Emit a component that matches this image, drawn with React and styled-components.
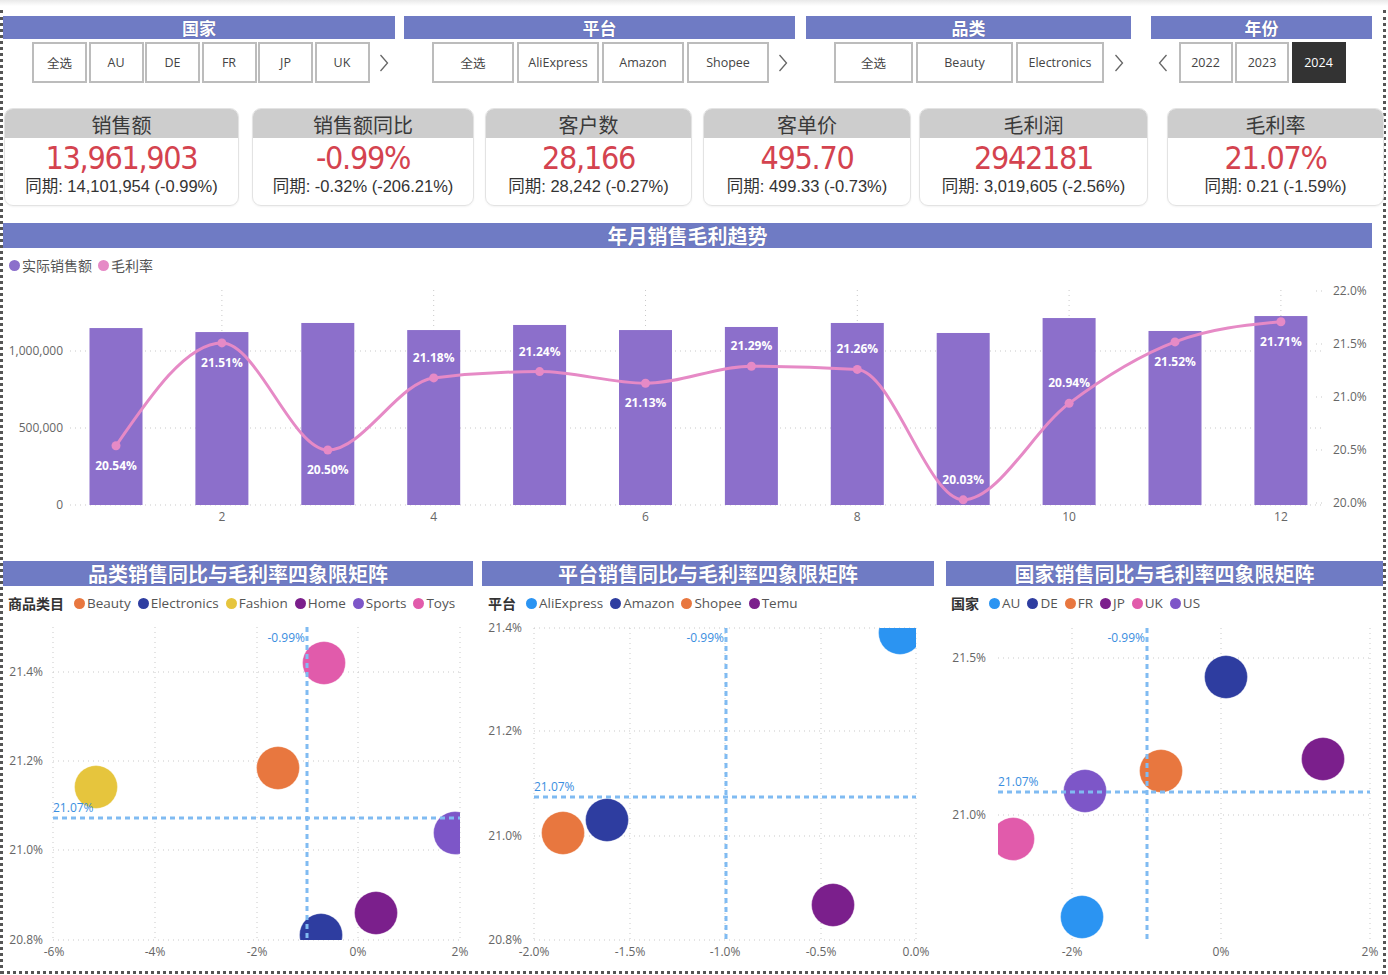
import React from 'react';
import styled, { createGlobalStyle } from 'styled-components';

const CJK = `"Noto Sans CJK SC", "Noto Sans", sans-serif`;
const UI = `"Open Sans", "Noto Sans CJK SC", sans-serif`;
const NUM = `"DejaVu Sans Condensed", "DejaVu Sans", sans-serif`;
const SUB = `"Liberation Sans", "Noto Sans CJK SC", sans-serif`;

const C = {
  header: '#6f7bc4',
  red: '#d4434f',
  bar: '#8c6fcb',
  line: '#e68ac6',
  ref: '#80bbf2',
  refText: '#3a8ee0',
  axis: '#666666',
  grid: '#c9c9c9',
  orange: '#e8773f',
  navy: '#2e3da0',
  yellow: '#e6c53d',
  plum: '#7b1f8c',
  violet: '#7d56c8',
  pink: '#e15bab',
  sky: '#2b94f2',
};

const GlobalStyle = createGlobalStyle`
  html, body { margin: 0; padding: 0; background: #fff; }
  body { font-family: ${UI}; color: #333; }
  * { box-sizing: border-box; }
`;

/* ---------- page frame ---------- */
const Shade = styled.div`
  height: 10px;
  width: 1388px;
  background: linear-gradient(#e9e9e9, #ffffff 60%);
`;

const Frame = styled.div`
  width: 1386px;
  height: 964px;
  border-left: 3px dotted #555;
  border-right: 3px dotted #555;
  border-bottom: 3px dotted #555;
  display: flex;
  flex-direction: column;
`;

/* ---------- slicers ---------- */
const SlicerRow = styled.div`
  display: flex;
  margin-top: 6px;
`;

const Slicer = styled.div`
  width: ${p => p.$w}px;
  margin-left: ${p => p.$gap || 0}px;
`;

const BarTitle = styled.div`
  height: ${p => p.$h || 23}px;
  background: ${C.header};
  color: #fff;
  font-family: ${CJK};
  font-weight: 700;
  font-size: ${p => p.$size || 17}px;
  line-height: ${p => p.$h || 23}px;
  text-align: center;
  text-shadow: 0 0 1px rgba(40, 40, 80, 0.45);
  white-space: nowrap;
`;

const ButtonRow = styled.div`
  display: flex;
  align-items: center;
  gap: ${p => p.$gap}px;
  margin-top: 3px;
  padding-left: ${p => p.$pad}px;
`;

const SlicerButton = styled.div`
  width: ${p => p.$w}px;
  height: 41px;
  border: 2px solid ${p => (p.$on ? '#333' : '#bcbcbc')};
  background: ${p => (p.$on ? '#333' : '#fff')};
  color: ${p => (p.$on ? '#fff' : '#444')};
  font-family: ${UI};
  font-size: 12.5px;
  display: flex;
  align-items: center;
  justify-content: center;
  flex-shrink: 0;
`;

const ArrowBox = styled.div`
  width: 12px;
  height: 41px;
  display: flex;
  align-items: center;
  justify-content: center;
  margin-left: ${p => p.$ml || 0}px;
  margin-right: ${p => p.$mr || 0}px;
  flex-shrink: 0;
`;

const Chevron = ({ dir, ml, mr }) => (
  <ArrowBox $ml={ml} $mr={mr}>
    <svg width="10" height="18" viewBox="0 0 10 18">
      <polyline
        points={dir === 'right' ? '1.5,1 8.5,9 1.5,17' : '8.5,1 1.5,9 8.5,17'}
        fill="none"
        stroke="#666"
        strokeWidth="1.3"
      />
    </svg>
  </ArrowBox>
);

/* ---------- KPI cards ---------- */
const KpiRow = styled.div`
  display: flex;
  margin-top: 25px;
  padding-left: 1px;
  height: 98px;
`;

const Card = styled.div`
  width: ${p => p.$w}px;
  margin-left: ${p => p.$gap || 0}px;
  height: 98px;
  border: 1px solid #e3e3e3;
  border-radius: 9px;
  overflow: hidden;
  box-shadow: 0 1px 2px rgba(0, 0, 0, 0.05);
  display: flex;
  flex-direction: column;
  align-items: center;
  flex-shrink: 0;
`;

const CardHead = styled.div`
  align-self: stretch;
  height: 29px;
  background: #cdcdcd;
  font-family: ${CJK};
  font-size: 20px;
  line-height: 31px;
  color: #3a3a3a;
  text-align: center;
`;

const CardValue = styled.div`
  margin-top: 2px;
  font-family: ${NUM};
  font-size: 32px;
  line-height: 37px;
  height: 37px;
  color: ${C.red};
  letter-spacing: -1.3px;
  white-space: nowrap;
`;

const CardSub = styled.div`
  font-family: ${SUB};
  font-size: 16.5px;
  line-height: 18px;
  height: 18px;
  color: #333;
  white-space: nowrap;
`;

/* ---------- trend chart ---------- */
const Section = styled.section`
  margin-top: ${p => p.$mt}px;
  width: ${p => p.$w}px;
  margin-left: ${p => p.$ml || 0}px;
  flex-shrink: 0;
`;

const Legend = styled.div`
  display: flex;
  align-items: center;
  height: 14px;
  margin-top: 10px;
  padding-left: ${p => p.$pad}px;
  font-family: ${UI};
  font-size: ${p => p.$size || 13.5}px;
  color: #555;
  white-space: nowrap;
`;

const LegendLabel = styled.span`
  font-family: ${CJK};
  font-size: 14px;
  font-weight: 700;
  color: #333;
  margin-right: 10px;
`;

const LegendItem = styled.span`
  display: inline-flex;
  align-items: center;
  margin-right: ${p => p.$mr ?? 6}px;
  font-family: ${p => (p.$cjk ? CJK : UI)};
`;

const Dot = styled.i`
  width: 11px;
  height: 11px;
  border-radius: 50%;
  background: ${p => p.$c};
  margin-right: 2px;
  display: inline-block;
`;

const ChartSvg = styled.svg`
  display: block;
  margin-top: ${p => p.$mt || 0}px;
  font-family: ${UI};
  overflow: visible;
`;

const BottomRow = styled.div`
  display: flex;
  margin-top: 31px;
`;

/* ---------- data ---------- */
const sales = [1149000, 1123000, 1182000, 1136000, 1169000, 1136000, 1156000, 1182000, 1117000, 1214000, 1130000, 1227000];
const margins = [20.54, 21.51, 20.5, 21.18, 21.24, 21.13, 21.29, 21.26, 20.03, 20.94, 21.52, 21.71];
const labelSide = [1, 1, 1, -1, -1, 1, -1, -1, -1, -1, 1, 1];

const mx = i => 116 + i * 105.9;
const salesY = v => 505 - (v / 1e6) * 154;
const rateY = r => 503 - (r - 20) * 106;

function monotonePath(pts) {
  const n = pts.length;
  const h = [];
  const s = [];
  for (let i = 0; i < n - 1; i++) {
    h[i] = pts[i + 1][0] - pts[i][0];
    s[i] = (pts[i + 1][1] - pts[i][1]) / h[i];
  }
  const t = new Array(n).fill(0);
  for (let i = 1; i < n - 1; i++) {
    const s0 = s[i - 1];
    const s1 = s[i];
    const p = (s0 * h[i] + s1 * h[i - 1]) / (h[i - 1] + h[i]);
    t[i] = (Math.sign(s0) + Math.sign(s1)) * Math.min(Math.abs(s0), Math.abs(s1), 0.5 * Math.abs(p)) || 0;
  }
  t[0] = (3 * s[0] - t[1]) / 2;
  t[n - 1] = (3 * s[n - 2] - t[n - 2]) / 2;
  let d = `M${pts[0][0]},${pts[0][1]}`;
  for (let i = 0; i < n - 1; i++) {
    const dx = h[i] / 3;
    d += ` C${pts[i][0] + dx},${pts[i][1] + dx * t[i]} ${pts[i + 1][0] - dx},${pts[i + 1][1] - dx * t[i + 1]} ${pts[i + 1][0]},${pts[i + 1][1]}`;
  }
  return d;
}

// chart drawn in page coordinates; the svg sits at x 3, y 275
const TOP = 275;
const LEFT = 3;

function TrendChart() {
  const pts = margins.map((r, i) => [mx(i), rateY(r)]);
  return (
    <ChartSvg width={1383} height={255} $mt={3}>
      <g transform={`translate(${-LEFT},${-TOP})`}>
        {[351, 428, 505].map(y => (
          <line key={y} x1={70} x2={1322} y1={y} y2={y} stroke={C.grid} strokeDasharray="1 4" />
        ))}
        {[291, 344, 397, 450, 503].map(y => (
          <line key={y} x1={1316} x2={1326} y1={y} y2={y} stroke={C.grid} strokeDasharray="1 4" />
        ))}
        {[1, 3, 5, 7, 9, 11].map(i => (
          <line key={i} x1={mx(i)} x2={mx(i)} y1={290} y2={505} stroke={C.grid} strokeDasharray="1 4" />
        ))}
        {[['1,000,000', 351], ['500,000', 428], ['0', 505]].map(([t, y]) => (
          <text key={t} x={63} y={y + 4} textAnchor="end" fontSize="12" fill={C.axis}>{t}</text>
        ))}
        {[['22.0%', 291], ['21.5%', 344], ['21.0%', 397], ['20.5%', 450], ['20.0%', 503]].map(([t, y]) => (
          <text key={t} x={1333} y={y + 4} fontSize="12" fill={C.axis}>{t}</text>
        ))}
        {[1, 3, 5, 7, 9, 11].map(i => (
          <text key={i} x={mx(i)} y={521} textAnchor="middle" fontSize="12" fill={C.axis}>{i + 1}</text>
        ))}
        {sales.map((v, i) => (
          <rect key={i} x={mx(i) - 26.5} y={salesY(v)} width={53} height={505 - salesY(v)} fill={C.bar} />
        ))}
        <path d={monotonePath(pts)} fill="none" stroke={C.line} strokeWidth="3" />
        {pts.map(([x, y], i) => (
          <circle key={i} cx={x} cy={y} r={4.5} fill={C.line} />
        ))}
        {pts.map(([x, y], i) => (
          <text
            key={i}
            x={x}
            y={y + labelSide[i] * 20 + 4}
            textAnchor="middle"
            fontSize="12"
            fontWeight="700"
            fill="#fff"
          >
            {margins[i].toFixed(2)}%
          </text>
        ))}
      </g>
    </ChartSvg>
  );
}

/* ---------- quadrant scatter ---------- */
const STOP = 615;

function Quadrant({ cfg }) {
  const { px, w, plot, vgrid, hgrid, xlabels, ylabels, yLabelX, refX, refY, bubbles, id } = cfg;
  return (
    <ChartSvg width={w} height={352} $mt={5}>
      <defs>
        <clipPath id={id}>
          <rect x={plot.x0} y={plot.y0} width={plot.x1 - plot.x0} height={plot.y1 - plot.y0} />
        </clipPath>
      </defs>
      <g transform={`translate(${-px},${-STOP})`}>
        {vgrid.map(x => (
          <line key={`v${x}`} x1={x} x2={x} y1={plot.y0} y2={plot.y1} stroke={C.grid} strokeDasharray="1 4" />
        ))}
        {hgrid.map(y => (
          <line key={`h${y}`} x1={plot.x0} x2={plot.x1} y1={y} y2={y} stroke={C.grid} strokeDasharray="1 4" />
        ))}
        {ylabels.map(([t, y]) => (
          <text key={t} x={yLabelX} y={y + 4} textAnchor="end" fontSize="12" fill={C.axis}>{t}</text>
        ))}
        {xlabels.map(([t, x]) => (
          <text key={t} x={x} y={956} textAnchor="middle" fontSize="12" fill={C.axis}>{t}</text>
        ))}
        <g clipPath={`url(#${id})`}>
          {bubbles.map(([x, y, c], i) => (
            <circle key={i} cx={x} cy={y} r={21.5} fill={c} stroke="rgba(255,255,255,0.35)" strokeWidth="1" />
          ))}
        </g>
        <line x1={refX} x2={refX} y1={plot.y0} y2={plot.y1} stroke={C.ref} strokeWidth="3" strokeDasharray="5 4" />
        <line x1={plot.x0} x2={plot.x1} y1={refY} y2={refY} stroke={C.ref} strokeWidth="3" strokeDasharray="5 4" />
        <text x={refX - 2} y={642} textAnchor="end" fontSize="12" fill={C.refText}>-0.99%</text>
        <text x={plot.x0} y={refY - 6} fontSize="12" fill={C.refText}>21.07%</text>
      </g>
    </ChartSvg>
  );
}

const categoryCfg = {
  id: 'clip-cat',
  px: 3,
  w: 470,
  plot: { x0: 53, x1: 460, y0: 627, y1: 940 },
  vgrid: [53, 155, 257, 358, 460],
  hgrid: [672, 761, 850, 940],
  ylabels: [['21.4%', 672], ['21.2%', 761], ['21.0%', 850], ['20.8%', 940]],
  yLabelX: 43,
  xlabels: [['-6%', 54], ['-4%', 155], ['-2%', 257], ['0%', 358], ['2%', 460]],
  refX: 307,
  refY: 818,
  bubbles: [
    [96, 787, C.yellow],
    [278, 768, C.orange],
    [324, 663, C.pink],
    [455, 833, C.violet],
    [376, 913, C.plum],
    [321, 935, C.navy],
  ],
};

const platformCfg = {
  id: 'clip-plat',
  px: 482,
  w: 452,
  plot: { x0: 534, x1: 916, y0: 628, y1: 940 },
  vgrid: [534, 630, 725, 821, 916],
  hgrid: [628, 731, 836, 940],
  ylabels: [['21.4%', 628], ['21.2%', 731], ['21.0%', 836], ['20.8%', 940]],
  yLabelX: 522,
  xlabels: [['-2.0%', 534], ['-1.5%', 630], ['-1.0%', 725], ['-0.5%', 821], ['0.0%', 916]],
  refX: 726,
  refY: 797,
  bubbles: [
    [900, 633, C.sky],
    [563, 833, C.orange],
    [607, 820, C.navy],
    [833, 905, C.plum],
  ],
};

const countryCfg = {
  id: 'clip-country',
  px: 946,
  w: 437,
  plot: { x0: 998, x1: 1370, y0: 628, y1: 940 },
  vgrid: [1072, 1221, 1370],
  hgrid: [658, 815],
  ylabels: [['21.5%', 658], ['21.0%', 815]],
  yLabelX: 986,
  xlabels: [['-2%', 1072], ['0%', 1221], ['2%', 1370]],
  refX: 1147,
  refY: 792,
  bubbles: [
    [1226, 677, C.navy],
    [1323, 759, C.plum],
    [1161, 771, C.orange],
    [1085, 791, C.violet],
    [1013, 839, C.pink],
    [1082, 917, C.sky],
  ],
};

const kpis = [
  { w: 235, gap: 0, title: '销售额', value: '13,961,903', sub: '同期: 14,101,954 (-0.99%)' },
  { w: 222, gap: 13, title: '销售额同比', value: '-0.99%', sub: '同期: -0.32% (-206.21%)' },
  { w: 207, gap: 11, title: '客户数', value: '28,166', sub: '同期: 28,242 (-0.27%)' },
  { w: 208, gap: 11, title: '客单价', value: '495.70', sub: '同期: 499.33 (-0.73%)' },
  { w: 229, gap: 8, title: '毛利润', value: '2942181', sub: '同期: 3,019,605 (-2.56%)' },
  { w: 217, gap: 19, title: '毛利率', value: '21.07%', sub: '同期: 0.21 (-1.59%)' },
];

const panels = [
  {
    w: 470, ml: 0, pad: 5, title: '品类销售同比与毛利率四象限矩阵', label: '商品类目', cfg: categoryCfg,
    items: [['Beauty', C.orange], ['Electronics', C.navy], ['Fashion', C.yellow], ['Home', C.plum], ['Sports', C.violet], ['Toys', C.pink]],
  },
  {
    w: 452, ml: 9, pad: 6, title: '平台销售同比与毛利率四象限矩阵', label: '平台', cfg: platformCfg,
    items: [['AliExpress', C.sky], ['Amazon', C.navy], ['Shopee', C.orange], ['Temu', C.plum]],
  },
  {
    w: 437, ml: 12, pad: 5, title: '国家销售同比与毛利率四象限矩阵', label: '国家', cfg: countryCfg,
    items: [['AU', C.sky], ['DE', C.navy], ['FR', C.orange], ['JP', C.plum], ['UK', C.pink], ['US', C.violet]],
  },
];

export default function App() {
  return (
    <>
      <GlobalStyle />
      <Shade />
      <Frame>
        <SlicerRow>
          <Slicer $w={392}>
            <BarTitle>国家</BarTitle>
            <ButtonRow $pad={29} $gap={1.5}>
              {['全选', 'AU', 'DE', 'FR', 'JP', 'UK'].map(t => (
                <SlicerButton key={t} $w={55}>{t}</SlicerButton>
              ))}
              <Chevron dir="right" ml={7} />
            </ButtonRow>
          </Slicer>
          <Slicer $w={391} $gap={9}>
            <BarTitle>平台</BarTitle>
            <ButtonRow $pad={28} $gap={3}>
              {['全选', 'AliExpress', 'Amazon', 'Shopee'].map(t => (
                <SlicerButton key={t} $w={82}>{t}</SlicerButton>
              ))}
              <Chevron dir="right" ml={5} />
            </ButtonRow>
          </Slicer>
          <Slicer $w={325} $gap={11}>
            <BarTitle>品类</BarTitle>
            <ButtonRow $pad={28} $gap={3}>
              <SlicerButton $w={79}>全选</SlicerButton>
              <SlicerButton $w={97}>Beauty</SlicerButton>
              <SlicerButton $w={88}>Electronics</SlicerButton>
              <Chevron dir="right" ml={6} />
            </ButtonRow>
          </Slicer>
          <Slicer $w={221} $gap={20}>
            <BarTitle>年份</BarTitle>
            <ButtonRow $pad={6} $gap={2.5}>
              <Chevron dir="left" mr={7} />
              <SlicerButton $w={54}>2022</SlicerButton>
              <SlicerButton $w={54}>2023</SlicerButton>
              <SlicerButton $w={54} $on>2024</SlicerButton>
            </ButtonRow>
          </Slicer>
        </SlicerRow>

        <KpiRow>
          {kpis.map(k => (
            <Card key={k.title} $w={k.w} $gap={k.gap}>
              <CardHead>{k.title}</CardHead>
              <CardValue>{k.value}</CardValue>
              <CardSub>{k.sub}</CardSub>
            </Card>
          ))}
        </KpiRow>

        <Section $mt={17} $w={1369}>
          <BarTitle $h={25} $size={20}>年月销售毛利趋势</BarTitle>
          <Legend $pad={6} $size={14}>
            <LegendItem $cjk>
              <Dot $c={C.bar} />实际销售额
            </LegendItem>
            <LegendItem $cjk>
              <Dot $c={C.line} />毛利率
            </LegendItem>
          </Legend>
          <TrendChart />
        </Section>

        <BottomRow>
          {panels.map(p => (
            <Section key={p.title} $mt={0} $w={p.w} $ml={p.ml}>
              <BarTitle $h={25} $size={20}>{p.title}</BarTitle>
              <Legend $pad={p.pad}>
                <LegendLabel>{p.label}</LegendLabel>
                {p.items.map(([t, c]) => (
                  <LegendItem key={t} $mr={7}>
                    <Dot $c={c} />{t}
                  </LegendItem>
                ))}
              </Legend>
              <Quadrant cfg={p.cfg} />
            </Section>
          ))}
        </BottomRow>
      </Frame>
    </>
  );
}
